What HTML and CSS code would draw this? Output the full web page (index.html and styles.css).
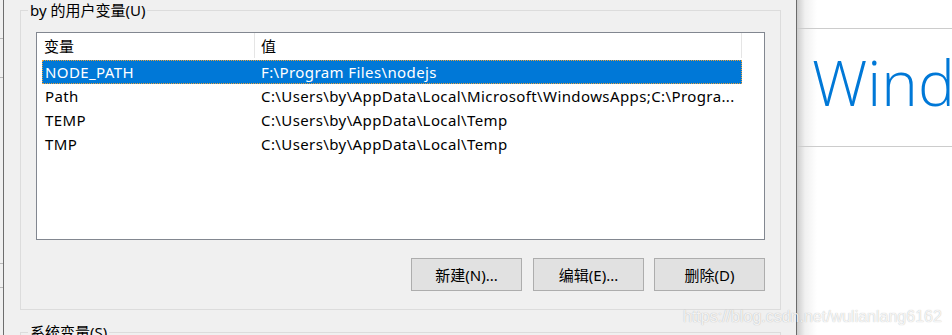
FILE: index.html
```html
<!DOCTYPE html>
<html lang="zh-CN">
<head>
<meta charset="utf-8">
<title>环境变量</title>
<link rel="stylesheet" href="styles.css">
</head>
<body>
  <div class="edge"></div>
  <div class="dialog">
    <fieldset class="group">
      <legend>by 的用户变量(U)</legend>
      <div class="list">
        <div class="header">
          <div class="hcell hname">变量</div>
          <div class="hcell hvalue">值</div>
        </div>
        <div class="rows">
          <div class="row selected"><span class="c1">NODE_PATH</span><span class="c2">F:\Program Files\nodejs</span></div>
          <div class="row"><span class="c1">Path</span><span class="c2">C:\Users\by\AppData\Local\Microsoft\WindowsApps;C:\Progra...</span></div>
          <div class="row"><span class="c1">TEMP</span><span class="c2">C:\Users\by\AppData\Local\Temp</span></div>
          <div class="row"><span class="c1">TMP</span><span class="c2">C:\Users\by\AppData\Local\Temp</span></div>
        </div>
      </div>
      <div class="actions">
        <button class="btn btn-first">新建(N)...</button>
        <button class="btn">编辑(E)...</button>
        <button class="btn">删除(D)</button>
      </div>
    </fieldset>
    <fieldset class="group group2">
      <legend>系统变量(S)</legend>
    </fieldset>
  </div>
  <div class="page">
    <div class="topbar"></div>
    <div class="title">Windows 设置</div>
  </div>
  <div class="watermark">https://blog.csdn.net/wulianlang6162</div>
</body>
</html>
```

FILE: styles.css
```css
html, body {
  margin: 0;
  padding: 0;
}

body {
  width: 952px;
  height: 335px;
  overflow: hidden;
  display: flex;
  position: relative;
  background: #ffffff;
  font-family: "Noto Sans", "Noto Sans CJK SC", sans-serif;
  font-size: 15px;
  color: #000;
}

.edge {
  width: 3px;
  flex: none;
  border-right: 1px solid #6d6d6d;
  background:
    linear-gradient(#b9b9b9, #b9b9b9) 0 38px / 100% 1px no-repeat,
    linear-gradient(#b9b9b9, #b9b9b9) 0 77px / 100% 1px no-repeat,
    linear-gradient(#b9b9b9, #b9b9b9) 0 263px / 100% 1px no-repeat,
    linear-gradient(#b9b9b9, #b9b9b9) 0 287px / 100% 1px no-repeat,
    #f0f0f0;
}

.dialog {
  width: 776px;
  height: 335px;
  overflow: hidden;
  flex: none;
  padding-left: 16px;
  background: #f0f0f0;
  border-right: 1px solid #6b6b6b;
}

.group {
  margin: 0;
  width: 761px;
  box-sizing: border-box;
  min-width: 0;
  padding: 12px 15px 18px;
  border: 1px solid #dcdcdc;
}

.group legend {
  margin-left: -8px;
  padding: 0 2px;
  line-height: 20px;
  font-size: 15px;
}

.group2 {
  margin-top: 12px;
  height: 40px;
}

.list {
  height: 208px;
  box-sizing: border-box;
  border: 1px solid #828790;
  background: #ffffff;
  overflow: hidden;
}

.header {
  display: flex;
  height: 26px;
}

.hcell {
  box-sizing: border-box;
  height: 25px;
  line-height: 26px;
  border-right: 1px solid #e5e5e5;
  white-space: nowrap;
}

.hname {
  width: 218px;
  padding-left: 7px;
}

.hvalue {
  width: 487px;
  padding-left: 6px;
}

.rows {
  margin-top: 1px;
  margin-left: 5px;
  width: 700px;
}

.row {
  display: flex;
  height: 24px;
  line-height: 24px;
  box-sizing: border-box;
  white-space: nowrap;
  letter-spacing: 0.4px;
}

.row .c1 {
  width: 212px;
  flex: none;
  padding-left: 3px;
  box-sizing: border-box;
}

.row .c2 {
  flex: 1;
  padding-left: 7px;
  overflow: hidden;
}

.row.selected {
  background: #0078d7;
  color: #ffffff;
  border: 1px dotted #e9a13b;
  line-height: 22px;
}

.row.selected .c1 {
  padding-left: 2px;
  width: 211px;
}

.actions {
  display: flex;
  justify-content: flex-end;
  gap: 10px;
  margin-top: 18px;
}

.btn {
  width: 111px;
  height: 33px;
  margin: 0;
  padding: 0;
  border: 1px solid #adadad;
  background: #e1e1e1;
  font-family: "Noto Sans", "Noto Sans CJK SC", sans-serif;
  font-size: 15px;
  color: #000;
}

.btn-first {
  margin-right: 1px;
}

.page {
  flex: 1;
  min-width: 0;
  background:
    linear-gradient(to right, rgba(0, 0, 0, 0.2), rgba(0, 0, 0, 0.06) 8px, rgba(0, 0, 0, 0) 20px),
    #ffffff;
}

.topbar {
  height: 28px;
  border-bottom: 1px solid #cccccc;
}

.title {
  height: 118px;
  box-sizing: border-box;
  border-bottom: 1px solid #cccccc;
  padding-top: 5px;
  padding-left: 15px;
  font-family: "Open Sans", sans-serif;
  font-weight: 300;
  font-size: 62px;
  color: #0078d7;
  white-space: nowrap;
  overflow: hidden;
}

.watermark {
  position: absolute;
  left: 683px;
  top: 308px;
  font-family: "Liberation Sans", Arial, sans-serif;
  font-size: 16px;
  color: rgba(255, 255, 255, 0.85);
  text-shadow: 0 0 1px rgba(0, 0, 0, 0.3);
  white-space: nowrap;
}
```
